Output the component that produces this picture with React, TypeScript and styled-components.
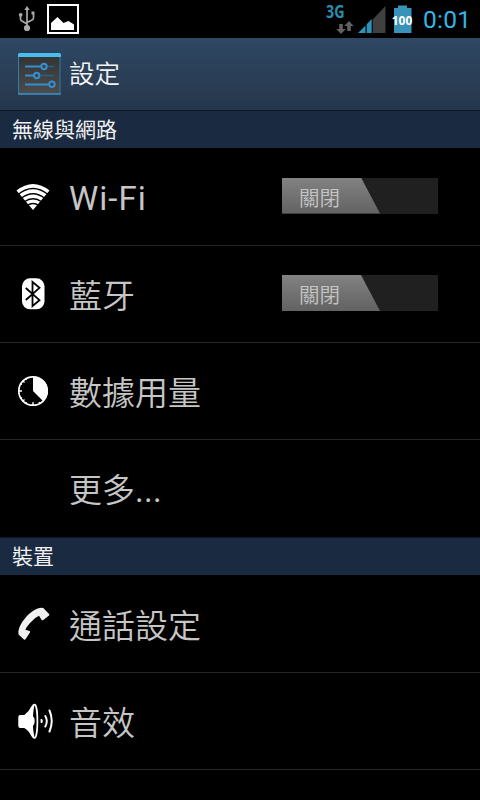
import React from 'react';
import styled, { createGlobalStyle } from 'styled-components';

const GlobalStyle = createGlobalStyle`
  body {
    margin: 0;
    background: #000;
    overflow: hidden;
  }
`;

const Screen = styled.div`
  width: 480px;
  height: 800px;
  overflow: hidden;
  background: #000;
  color: #c6c6c6;
  font-family: Roboto, 'Noto Sans CJK TC', sans-serif;
`;

const StatusBar = styled.div`
  display: flex;
  justify-content: space-between;
  height: 38px;
`;

const StatusGroup = styled.div`
  display: flex;
`;

const Network = styled.div`
  position: relative;
  width: 32px;
  height: 38px;
`;

const NetworkType = styled.div`
  color: #2b8cae;
  font: bold 17px/22px 'Open Sans', sans-serif;
  transform: scaleX(0.84);
  transform-origin: left;
  padding-top: 1px;
`;

const DataArrows = styled.svg`
  position: absolute;
  left: 10px;
  top: 20px;
`;

const Battery = styled.div`
  position: relative;
  width: 24px;
  height: 38px;
  margin-right: 5px;
`;

const BatteryLevel = styled.span`
  position: absolute;
  left: -7px;
  width: 30px;
  top: 12px;
  color: #fff;
  text-align: center;
  font: bold 12px/18px 'Open Sans', sans-serif;
`;

const Clock = styled.div`
  width: 57px;
  color: #33b5e5;
  font-size: 24.5px;
  line-height: 40px;
  letter-spacing: 0.3px;
  white-space: nowrap;
`;

const ActionBar = styled.div`
  box-sizing: border-box;
  display: flex;
  align-items: center;
  height: 72px;
  padding-left: 16px;
  background: linear-gradient(#2f4764, #26374b);
`;

const Title = styled.div`
  margin-left: 7px;
  color: #f3f3f3;
  font-size: 25.5px;
  font-weight: 350;
  line-height: 38px;
`;

const SectionHeader = styled.div`
  box-sizing: border-box;
  height: 38px;
  padding-left: 12px;
  border-top: 1px solid #0e1824;
  background: #1a2a40;
  color: #f0f0f0;
  font-size: 21px;
  line-height: 38px;
`;

const Row = styled.div<{ $first?: boolean; $last?: boolean }>`
  box-sizing: border-box;
  display: flex;
  align-items: center;
  height: ${p => (p.$first ? 98 : 97)}px;
  padding-right: 42px;
  border-bottom: 1px solid ${p => (p.$last ? '#000' : '#252525')};
`;

const IconSlot = styled.div`
  display: flex;
  width: 69px;
  padding-left: 16px;
  box-sizing: border-box;
`;

const Label = styled.div<{ $latin?: boolean }>`
  flex: 1;
  padding-top: ${p => (p.$latin ? 4 : 6)}px;
  font-size: 33px;
  line-height: 48px;
  font-weight: ${p => (p.$latin ? 400 : 350)};
  letter-spacing: ${p => (p.$latin ? '1px' : 'normal')};
  white-space: nowrap;
`;

const Dots = styled.span`
  font-weight: 400;
  letter-spacing: 0.3px;
`;

const Toggle = styled.div`
  width: 156px;
  height: 36px;
  margin-top: -2px;
  background: #202020;
`;

const ToggleThumb = styled.div`
  box-sizing: border-box;
  width: 98px;
  height: 36px;
  padding-left: 17px;
  background: linear-gradient(#828282, #626262);
  clip-path: polygon(0 0, 79px 0, 98px 100%, 0 100%);
  color: #c4c4c4;
  font-size: 20.5px;
  font-weight: 350;
  line-height: 42px;
`;

const UsbIcon = () => (
  <svg width="47" height="38" fill="none" stroke="#aaa" strokeWidth="1.7">
    <path d="M27 9v20M20.5 15v4q0 1.5 1.5 2l5 3M33.5 14v4q0 1.5-1.5 2l-5 2.5" />
    <path d="M24.3 10 27 6l2.7 4zM31.5 11.500h3v3h-3z" fill="#aaa" stroke="none" />
    <circle cx="20.7" cy="14.8" r="1.9" fill="#aaa" stroke="none" />
    <circle cx="27" cy="28" r="3.1" fill="#aaa" stroke="none" />
  </svg>
);

const PictureIcon = () => (
  <svg width="34" height="38">
    <path d="M1 5h30v28H1z" fill="#000" stroke="#fff" strokeWidth="2" />
    <path d="M4 30v-7l6.5-6 6 6 5-2 5.5 3.5V30z" fill="#fff" />
  </svg>
);

const SignalIcon = () => (
  <svg width="36" height="38">
    <path d="M14.7 19.5 27.5 6v27H14.7z" fill="#404040" />
    <path d="M7.5 25.5V33H0zM8.7 24.3l5-5.3v14h-5z" fill="#3092b8" />
  </svg>
);

const SlidersIcon = () => (
  <svg width="46" height="46" viewBox="16 51 46 46">
    <defs>
      <linearGradient id="panel" x2="0" y2="1">
        <stop stopColor="#333" />
        <stop offset="1" stopColor="#4c4c4c" />
      </linearGradient>
    </defs>
    <path d="M18.5 55H60v39H18.500z" fill="url(#panel)" stroke="#2c7db0" />
    <path d="M18 57v-2.5q0-1.5 1.5-1.5h40q1.5 0 1.5 1.5V57z" fill="#48bdf0" />
    <path d="M18 94h43" stroke="#3f9fdc" />
    <path d="M47 66.500h7M40 75.500h14" stroke="#28608c" strokeWidth="1.6" />
    <path d="M25 66.500h16M25 75.500h9M25 84.500h24" stroke="#3290d2" strokeWidth="1.9" />
    <g fill="#414141" stroke="#3290d2" strokeWidth="2">
      <circle cx="44" cy="66.5" r="2.700" />
      <circle cx="36.7" cy="75.5" r="2.700" />
      <circle cx="52" cy="84.3" r="2.700" />
    </g>
  </svg>
);

const WifiIcon = () => (
  <svg width="34" height="30" viewBox="16 182 34 30">
    <path d="M33 210 16.5 190.5Q33 177.500 49.5 190.500z" fill="#fff" />
    <g fill="none" stroke="#000" strokeWidth="1.3">
      <path d="M18 194.500Q33 182.500 48 194.500" />
      <path d="M21 198.500Q33 189 45 198.500" />
      <path d="M24 202Q33 195.500 42 202" />
      <path d="M27 205.500Q33 201.500 39 205.500" />
    </g>
  </svg>
);

const BluetoothIcon = () => (
  <svg width="34" height="34" viewBox="16 277 34 34">
    <rect x="22" y="278.3" width="22.5" height="31" rx="8" fill="#fff" />
    <path
      d="m25.8 288 13.700 12.200-7 5.800v-24l7 5.800L25.800 300"
      fill="none"
      stroke="#000"
      strokeWidth="1.8"
    />
  </svg>
);

const DataUsageIcon = () => (
  <svg width="34" height="34" viewBox="16 374 34 34">
    <circle cx="33" cy="391" r="14.2" fill="#000" stroke="#fff" strokeWidth="1.7" />
    <path d="M33 391v-14.500a14.500 14.500 0 0 1 10.500 25z" fill="#fff" />
    <path
      d="M18 391h4M33 402v4M22.5 380.500l2 2M22.500 401.500l2-2M25.500 378l1 2M20 383.500l2 1M20 398.500l2-1M25.500 404l1-2M40 404l-1-2"
      stroke="#fff"
      strokeWidth="1.3"
    />
  </svg>
);

const PhoneIcon = () => (
  <svg width="34" height="34" viewBox="16 608 34 34">
    <path
      d="M38.300 609.300Q41 608.500 43.300 609L49.300 615.200Q49.500 616.200 48.700 616.800L43 621.200Q42 621.600 41.500 620.800L39 616.700Q34.500 618.500 30 624Q26.500 628 25.300 630.700L29.600 632Q30.500 632.500 30 633.500L25.500 640.300Q24.700 641 23.900 640.500L18.500 635.600Q17.900 632 19.500 628Q22 622.500 26.700 617.300Q32.500 611.300 38.300 609.300z"
      fill="#f1f1f1"
    />
  </svg>
);

const SoundIcon = () => (
  <svg width="38" height="38" viewBox="16 702 38 38">
    <path
      d="M18.3 717q0-2 2-2h4q4.500-3 7-8.500 1.300-2.800 3.200-2.800v35q-1.900 0-3.200-2.800-2.500-5.500-7-8h-4q-2 0-2-2z"
      fill="#fff"
    />
    <ellipse cx="34.7" cy="721.2" rx="2.7" ry="16.600" fill="#000" stroke="#fff" strokeWidth="1.7" />
    <path d="M31 715.500q3.700.5 3.700 5.500T31 726.500z" fill="#fff" />
    <g fill="none" stroke="#fff" strokeWidth="2" strokeLinecap="round">
      <path d="M41.5 720q.5 1 0 2M45.300 716q3 5 0 10.500M49.500 710.500q4.500 10.500 0 21" />
    </g>
  </svg>
);

const wirelessItems = [
  { label: 'Wi-Fi', latin: true, icon: <WifiIcon />, toggle: '關閉' },
  { label: '藍牙', icon: <BluetoothIcon />, toggle: '關閉' },
  { label: '數據用量', icon: <DataUsageIcon /> },
  { label: '更多', dots: true, icon: null },
];

const deviceItems = [
  { label: '通話設定', icon: <PhoneIcon /> },
  { label: '音效', icon: <SoundIcon /> },
];

const App = () => {
  return (
    <>
      <GlobalStyle />
      <Screen>
        <StatusBar>
          <StatusGroup>
            <UsbIcon />
            <PictureIcon />
          </StatusGroup>
          <StatusGroup>
            <Network>
              <NetworkType>3G</NetworkType>
              <DataArrows width="18" height="15" fill="#606060">
                <path d="M3.200 4h3.600v5h3L5 14 .2 9h3zM11.200 11h3.600V6h2.900L13 1 8.300 6h2.900z" />
              </DataArrows>
            </Network>
            <SignalIcon />
            <Battery>
              <svg width="20" height="38">
                <path d="M0 8h4V5.500h9V8h4.500v25H0z" fill="#3992b8" />
              </svg>
              <BatteryLevel>100</BatteryLevel>
            </Battery>
            <Clock>0:01</Clock>
          </StatusGroup>
        </StatusBar>

        <ActionBar>
          <SlidersIcon />
          <Title>設定</Title>
        </ActionBar>

        <SectionHeader>無線與網路</SectionHeader>
        {wirelessItems.map((item, i) => (
          <Row key={item.label} $first={i === 0} $last={i === wirelessItems.length - 1}>
            <IconSlot>{item.icon}</IconSlot>
            <Label $latin={item.latin}>
              {item.label}
              {item.dots && <Dots>...</Dots>}
            </Label>
            {item.toggle && (
              <Toggle>
                <ToggleThumb>{item.toggle}</ToggleThumb>
              </Toggle>
            )}
          </Row>
        ))}

        <SectionHeader>裝置</SectionHeader>
        {deviceItems.map((item, i) => (
          <Row key={item.label} $first={i === 0}>
            <IconSlot>{item.icon}</IconSlot>
            <Label>{item.label}</Label>
          </Row>
        ))}
      </Screen>
    </>
  );
};

export default App;
